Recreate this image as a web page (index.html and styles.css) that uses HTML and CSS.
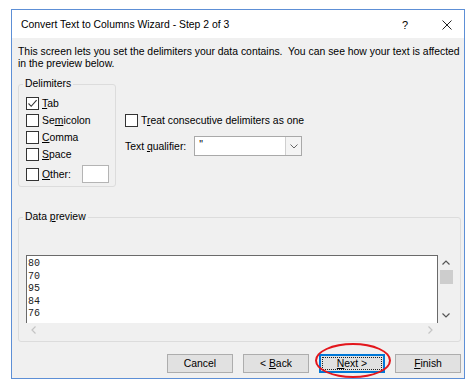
FILE: index.html
```html
<!DOCTYPE html>
<html lang="en">

<head>
    <meta charset="UTF-8">
    <meta name="viewport" content="width=device-width, initial-scale=1.0">
    <title>Convert Text to Columns Wizard</title>
    <link rel="stylesheet" href="styles.css">
</head>

<body>

    <div class="window">
        <!-- Title bar -->
        <div class="titlebar">
            <span class="title">Convert Text to Columns Wizard - Step 2 of 3</span>
            <span class="help">?</span>
            <span class="close">
                <svg width="10" height="10" viewBox="0 0 10 10">
                    <path d="M0.5 0.5 L9.5 9.5 M9.5 0.5 L0.5 9.5" stroke="#222" stroke-width="1" fill="none" />
                </svg>
            </span>
        </div>

        <div class="content">
            <p class="intro">This screen lets you set the delimiters your data contains.&nbsp; You can see how your text is affected<br>in the preview below.</p>

            <div class="options">
                <!-- Delimiters group -->
                <fieldset class="group delimiters">
                    <legend>Delimiters</legend>
                    <div class="list">
                        <label class="check">
                            <span class="box">
                                <svg width="11" height="11" viewBox="0 0 11 11">
                                    <path d="M1.5 5.5 L4.2 8.3 L9.6 2.2" stroke="#333" stroke-width="1.1" fill="none" />
                                </svg>
                            </span>
                            <span><u>T</u>ab</span>
                        </label>
                        <label class="check"><span class="box"></span><span>Se<u>m</u>icolon</span></label>
                        <label class="check"><span class="box"></span><span><u>C</u>omma</span></label>
                        <label class="check"><span class="box"></span><span><u>S</u>pace</span></label>
                        <label class="check other"><span class="box"></span><span><u>O</u>ther:</span><span class="other-input"></span></label>
                    </div>
                </fieldset>

                <div class="side">
                    <label class="check"><span class="box"></span><span>T<u>r</u>eat consecutive delimiters as one</span></label>
                    <div class="qualifier">
                        <span>Text <u>q</u>ualifier:</span>
                        <div class="select">
                            <span class="value">"</span>
                            <span class="arrow">
                                <svg width="8" height="5" viewBox="0 0 8 5">
                                    <path d="M0.5 0.5 L4 4 L7.5 0.5" stroke="#666" stroke-width="1" fill="none" />
                                </svg>
                            </span>
                        </div>
                    </div>
                </div>
            </div>

            <!-- Data preview group -->
            <fieldset class="group preview">
                <legend>Data <u>p</u>review</legend>
                <div class="preview-box">
                    <div class="rows">80<br>70<br>95<br>84<br>76</div>
                    <div class="vbar">
                        <span class="arrow-area">
                            <svg width="8" height="5" viewBox="0 0 8 5">
                                <path d="M0.5 4.5 L4 1 L7.5 4.5" stroke="#555" stroke-width="1.2" fill="none" />
                            </svg>
                        </span>
                        <span class="thumb"></span>
                        <span class="spacer"></span>
                        <span class="arrow-area">
                            <svg width="8" height="5" viewBox="0 0 8 5">
                                <path d="M0.5 0.5 L4 4 L7.5 0.5" stroke="#555" stroke-width="1.2" fill="none" />
                            </svg>
                        </span>
                    </div>
                    <div class="hbar">
                        <span class="arrow-area">
                            <svg width="5" height="8" viewBox="0 0 5 8">
                                <path d="M4.5 0.5 L1 4 L4.5 7.5" stroke="#c4c4c4" stroke-width="1.2" fill="none" />
                            </svg>
                        </span>
                        <span class="arrow-area">
                            <svg width="5" height="8" viewBox="0 0 5 8">
                                <path d="M0.5 0.5 L4 4 L0.5 7.5" stroke="#c4c4c4" stroke-width="1.2" fill="none" />
                            </svg>
                        </span>
                    </div>
                </div>
            </fieldset>

            <!-- Wizard buttons -->
            <div class="buttons">
                <button class="btn">Cancel</button>
                <button class="btn">&lt; <u>B</u>ack</button>
                <span class="next-wrap">
                    <button class="btn btn-default"><u>N</u>ext &gt;</button>
                    <span class="highlight"></span>
                </span>
                <button class="btn"><u>F</u>inish</button>
            </div>
        </div>
    </div>

</body>

</html>
```

FILE: styles.css
```css
body {
    margin: 0;
    background-color: #ffffff;
    font-family: "Liberation Sans", Arial, sans-serif;
    font-size: 10.4px;
    color: #000;
}

.window {
    width: 454px;
    margin: 9px 0 0 11px;
    border: 1px solid #5d8fd6;
    box-sizing: border-box;
}

/* Title bar */
.titlebar {
    height: 28px;
    display: flex;
    align-items: center;
    padding: 1px 9px 0 9px;
    box-sizing: border-box;
    background-color: #ffffff;
}

.title {
    flex: 1;
}

.help {
    width: 16px;
    text-align: center;
    font-size: 11px;
}

.close {
    width: 16px;
    margin-left: 26px;
    display: flex;
    justify-content: center;
}

/* Dialog body */
.content {
    background-color: #f0f0f0;
    padding: 8px 3px 5px 6px;
}

.intro {
    margin: 0;
    line-height: 12px;
}

.options {
    display: flex;
    align-items: flex-start;
    margin-top: 8px;
}

/* Group boxes */
.group {
    margin: 0;
    min-width: 0;
    border: 1px solid #dcdcdc;
    border-radius: 3px;
}

.group legend {
    margin-left: -3px;
    padding: 0 2px;
    line-height: 12px;
}

.delimiters {
    width: 98px;
    box-sizing: border-box;
    padding: 7px 6px 3px 7px;
}

.list {
    display: flex;
    flex-direction: column;
    gap: 4px;
}

.check {
    display: flex;
    align-items: center;
    gap: 3px;
    height: 13px;
}

.check.other {
    height: 18px;
}

.box {
    width: 13px;
    height: 13px;
    box-sizing: border-box;
    border: 1px solid #333;
    background-color: #fff;
    display: flex;
    align-items: center;
    justify-content: center;
}

.other-input {
    width: 27px;
    height: 18px;
    margin-left: auto;
    box-sizing: border-box;
    border: 1px solid #b4b4b4;
    background-color: #fff;
}

.side {
    margin: 36px 0 0 9px;
}

.qualifier {
    display: flex;
    align-items: center;
    gap: 8px;
    margin-top: 9px;
}

.select {
    width: 108px;
    height: 20px;
    box-sizing: border-box;
    border: 1px solid #a9a9a9;
    background-color: #fff;
    display: flex;
}

.select .value {
    flex: 1;
    padding: 2px 0 0 4px;
}

.select .arrow {
    width: 15px;
    border-left: 1px solid #cfcfcf;
    background-color: #f4f4f4;
    display: flex;
    align-items: center;
    justify-content: center;
}

/* Data preview */
.preview {
    margin-top: 24px;
    padding: 32px 6px 4px 7px;
}

.preview-box {
    display: grid;
    grid-template-columns: 1fr 16px;
    grid-template-rows: 68px 14px;
}

.rows {
    background-color: #fff;
    border: 1px solid #6a6a6a;
    border-bottom: none;
    padding: 2px 0 0 1px;
    font-family: "Liberation Mono", "Courier New", monospace;
    font-size: 10px;
    line-height: 12.6px;
    color: #222;
    overflow: hidden;
}

.vbar {
    display: flex;
    flex-direction: column;
    align-items: center;
}

.vbar .arrow-area {
    height: 15px;
    display: flex;
    align-items: center;
    justify-content: center;
}

.thumb {
    width: 13px;
    height: 14px;
    margin-left: 1px;
    background-color: #cdcdcd;
}

.spacer {
    flex: 1;
}

.hbar {
    display: flex;
    justify-content: space-between;
}

.hbar .arrow-area {
    width: 15px;
    display: flex;
    align-items: center;
    justify-content: center;
}

/* Buttons */
.buttons {
    display: flex;
    justify-content: flex-end;
    gap: 10px;
    margin-top: 12px;
}

.btn {
    width: 66px;
    height: 19px;
    margin: 0;
    padding: 0;
    border: 1px solid #adadad;
    background-color: #e1e1e1;
    font-family: inherit;
    font-size: 10.4px;
    color: #000;
}

.btn-default {
    border-color: #0078d7;
    box-shadow: inset 0 0 0 1px #0078d7;
    outline: 1px dotted #222;
    outline-offset: -4px;
}

.next-wrap {
    position: relative;
    display: flex;
}

/* Red circle drawn over the Next button */
.highlight {
    position: absolute;
    left: -4px;
    top: -11px;
    width: 76px;
    height: 35px;
    box-sizing: border-box;
    border: 2px solid #e3161c;
    border-radius: 50%;
}
```
